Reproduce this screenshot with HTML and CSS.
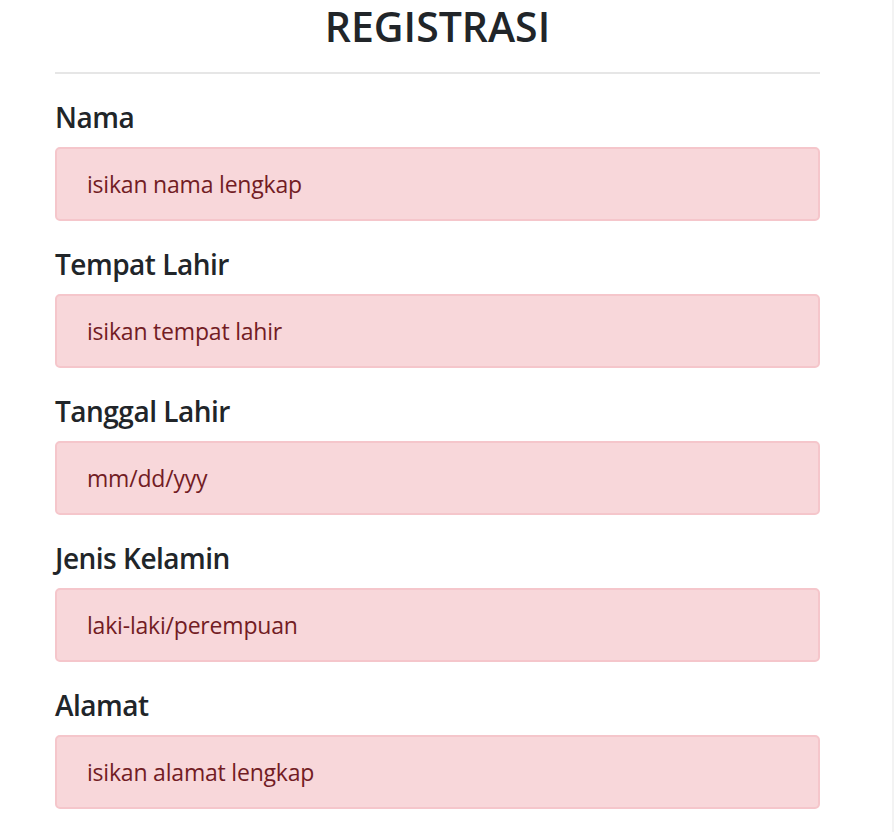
FILE: index.html
```html
<!DOCTYPE html>
<html lang="id">
<head>
<meta charset="utf-8">
<title>Registrasi</title>
<link rel="stylesheet" href="styles.css">
</head>
<body>
<div class="page">
  <main class="container">
    <h1 class="title">REGISTRASI</h1>
    <hr class="divider">
    <form class="form">
      <div class="field">
        <h3 class="label">Nama</h3>
        <div class="box">isikan nama lengkap</div>
      </div>
      <div class="field">
        <h3 class="label">Tempat Lahir</h3>
        <div class="box">isikan tempat lahir</div>
      </div>
      <div class="field">
        <h3 class="label">Tanggal Lahir</h3>
        <div class="box">mm/dd/yyy</div>
      </div>
      <div class="field">
        <h3 class="label">Jenis Kelamin</h3>
        <div class="box">laki-laki/perempuan</div>
      </div>
      <div class="field">
        <h3 class="label">Alamat</h3>
        <div class="box">isikan alamat lengkap</div>
      </div>
    </form>
  </main>
</div>
</body>
</html>
```
FILE: styles.css
```css
* { box-sizing: border-box; }
html, body { margin: 0; padding: 0; background: #fff; }
body {
  font-family: "Open Sans", "Noto Sans", sans-serif;
  color: #212529;
  height: 832px;
  overflow: hidden;
}
.page {
  width: 894px;
  height: 832px;
  border-right: 2px solid #f3f3f3;
}
.container {
  width: 765px;
  margin-left: 55px;
  display: flex;
  flex-direction: column;
}
.title {
  margin: 0;
  font-size: 41px;
  font-weight: 600;
  line-height: 52px;
  text-align: center;
}
.divider {
  margin: 20px 0 0;
  border: 0;
  border-top: 2px solid #e6e6e6;
  height: 0;
}
.form {
  display: flex;
  flex-direction: column;
  gap: 25px;
  padding-top: 25px;
}
.field {
  display: flex;
  flex-direction: column;
  gap: 12px;
}
.label {
  margin: 0;
  font-size: 28px;
  font-weight: 600;
  line-height: 36px;
  letter-spacing: -0.5px;
}
.box {
  height: 74px;
  background: #f8d7da;
  border: 2px solid #f5c6cb;
  border-radius: 5px;
  color: #721c24;
  font-size: 23px;
  line-height: 70px;
  padding-left: 30px;
  letter-spacing: -0.2px;
}
```
